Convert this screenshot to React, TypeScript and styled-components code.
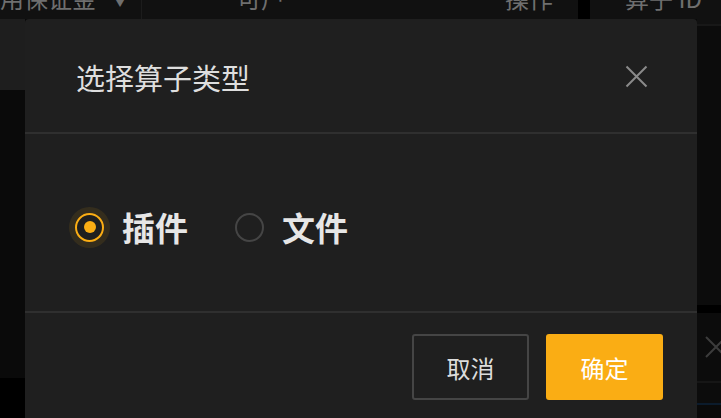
import styled, { createGlobalStyle } from 'styled-components';

const GlobalStyle = createGlobalStyle`
  html, body {
    margin: 0;
    padding: 0;
    background: #0a0a0a;
  }
  * {
    box-sizing: border-box;
  }
`;

const Page = styled.div`
  position: relative;
  width: 721px;
  height: 418px;
  overflow: hidden;
  background: #0a0a0a;
  font-family: "Noto Sans CJK SC", "Noto Sans", sans-serif;
`;

const HeaderRow = styled.div`
  display: flex;
  height: 19px;
  background: #111111;
  overflow: hidden;
`;

const HeaderCell = styled.div<{ $width: number; $divider?: boolean }>`
  flex: 0 0 ${({ $width }) => $width}px;
  display: flex;
  align-items: flex-start;
  gap: 14px;
  border-right: ${({ $divider }) => ($divider ? '1px solid #1c1c1c' : 'none')};
  color: #6f6f6f;
  font-size: 24px;
  line-height: 24px;
`;

const HeaderText = styled.span`
  margin-top: -14px;
  white-space: nowrap;
`;

const Caret = styled.span`
  margin-top: -14px;
  font-size: 20px;
  color: #6f6f6f;
`;

const Gap = styled.div`
  flex: 0 0 12px;
  background: #000;
`;

const Body = styled.div`
  display: flex;
  height: 399px;
`;

const LeftStrip = styled.div`
  flex: 0 0 25px;
  display: flex;
  flex-direction: column;
`;

const Block = styled.div<{ $h: number; $bg: string; $line?: string }>`
  flex: 0 0 ${({ $h }) => $h}px;
  background: ${({ $bg }) => $bg};
  border-bottom: ${({ $line }) => ($line ? `2px solid ${$line}` : 'none')};
  display: flex;
  align-items: center;
  justify-content: flex-end;
  overflow: hidden;
`;

const Spacer = styled.div`
  flex: 0 0 672px;
`;

const RightStrip = styled.div`
  flex: 1;
  display: flex;
  flex-direction: column;
`;

const FaintX = styled.svg`
  margin-right: -8px;
`;

const Modal = styled.div`
  position: absolute;
  left: 25px;
  top: 19px;
  width: 672px;
  height: 420px;
  background: #1f1f1f;
  border-radius: 4px 4px 0 0;
  display: flex;
  flex-direction: column;
`;

const ModalHeader = styled.div`
  height: 115px;
  padding: 2px 49px 0 51px;
  display: flex;
  align-items: center;
  justify-content: space-between;
  border-bottom: 2px solid #2f2f2f;
`;

const Title = styled.div`
  font-size: 29px;
  color: #dedede;
`;

const CloseButton = styled.button`
  width: 24px;
  height: 24px;
  padding: 0;
  border: none;
  background: transparent;
  display: flex;
  align-items: center;
  justify-content: center;
  cursor: pointer;
`;

const ModalBody = styled.div`
  height: 179px;
  padding: 9px 0 0 50px;
  display: flex;
  align-items: center;
  gap: 47px;
  border-bottom: 2px solid #2f2f2f;
`;

const RadioLabel = styled.label`
  display: flex;
  align-items: center;
  gap: 18px;
  cursor: pointer;
`;

const RadioRing = styled.span<{ $checked: boolean }>`
  width: 29px;
  height: 29px;
  border-radius: 50%;
  border: 2px solid ${({ $checked }) => ($checked ? '#faad14' : '#454545')};
  box-shadow: ${({ $checked }) => ($checked ? '0 0 0 6px rgba(250, 173, 20, 0.1)' : 'none')};
  display: flex;
  align-items: center;
  justify-content: center;
`;

const RadioDot = styled.span`
  width: 12px;
  height: 12px;
  border-radius: 50%;
  background: #faad14;
`;

const RadioText = styled.span`
  font-size: 33px;
  font-weight: 700;
  color: #e6e6e6;
  line-height: 1;
`;

const ModalFooter = styled.div`
  padding: 21px 34px 0 0;
  display: flex;
  justify-content: flex-end;
  gap: 17px;
`;

const Button = styled.button<{ $primary?: boolean }>`
  width: 117px;
  height: 66px;
  border-radius: 3px;
  font-family: "Noto Sans CJK SC", "Noto Sans", sans-serif;
  font-size: 24px;
  color: ${({ $primary }) => ($primary ? '#ffffff' : '#dcdcdc')};
  background: ${({ $primary }) => ($primary ? '#faad14' : 'transparent')};
  border: 2px solid ${({ $primary }) => ($primary ? '#faad14' : '#454545')};
  cursor: pointer;
`;

const options = [
  { key: 'plugin', label: '插件', checked: true },
  { key: 'file', label: '文件', checked: false },
];

export default function App() {
  return (
    <>
      <GlobalStyle />
      <Page>
        <HeaderRow>
          <HeaderCell $width={142} $divider>
            <HeaderText>用保证金</HeaderText>
            <Caret>▼</Caret>
          </HeaderCell>
          <HeaderCell $width={436}>
            <HeaderText style={{ marginLeft: 95 }}>可户</HeaderText>
            <HeaderText style={{ marginLeft: 'auto', marginRight: 25 }}>操作</HeaderText>
          </HeaderCell>
          <Gap />
          <HeaderCell $width={131}>
            <HeaderText style={{ marginLeft: 35 }}>算子 ID</HeaderText>
          </HeaderCell>
        </HeaderRow>
        <Body>
          <LeftStrip>
            <Block $h={71} $bg="#1e1e1e" />
            <Block $h={288} $bg="#0a0a0a" />
            <Block $h={40} $bg="#000000" />
          </LeftStrip>
          <Spacer />
          <RightStrip>
            <Block $h={7} $bg="#111111" $line="#181818" />
            <Block $h={279} $bg="#0c0c0c" />
            <Block $h={8} $bg="#000000" />
            <Block $h={70} $bg="#0c0c0c" $line="#161616">
              <FaintX width="26" height="26" viewBox="0 0 26 26">
                <path d="M3 3 L23 23 M23 3 L3 23" stroke="#3c3c3c" strokeWidth="2" />
              </FaintX>
            </Block>
            <Block $h={22} $bg="#0c0c0c" $line="#0b1b2c" />
          </RightStrip>
        </Body>

        <Modal role="dialog">
          <ModalHeader>
            <Title>选择算子类型</Title>
            <CloseButton aria-label="close">
              <svg width="23" height="23" viewBox="0 0 23 23">
                <path d="M1.5 1.5 L21.5 21.5 M21.5 1.5 L1.5 21.5" stroke="#8a8a8a" strokeWidth="2" />
              </svg>
            </CloseButton>
          </ModalHeader>
          <ModalBody>
            {options.map(o => (
              <RadioLabel key={o.key}>
                <RadioRing $checked={o.checked}>{o.checked && <RadioDot />}</RadioRing>
                <RadioText>{o.label}</RadioText>
              </RadioLabel>
            ))}
          </ModalBody>
          <ModalFooter>
            <Button>取消</Button>
            <Button $primary>确定</Button>
          </ModalFooter>
        </Modal>
      </Page>
    </>
  );
}
